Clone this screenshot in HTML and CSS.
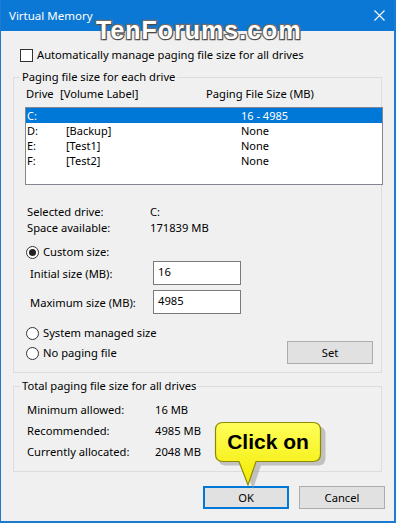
FILE: index.html
```html
<!DOCTYPE html>
<html lang="en">
<head>
    <meta charset="UTF-8">
    <meta name="viewport" content="width=device-width, initial-scale=1.0">
    <title>Virtual Memory</title>
    <link rel="stylesheet" href="styles.css">
</head>
<body>
    <div class="window">
        <div class="titlebar">
            <span class="title">Virtual Memory</span>
            <svg class="close" width="11" height="11" viewBox="0 0 11 11">
                <path d="M0.5 0.5 L10.5 10.5 M10.5 0.5 L0.5 10.5" stroke="#fff" stroke-width="1.1" fill="none"/>
            </svg>
        </div>

        <div class="watermark">TenForums.com</div>

        <div class="dialog">
            <label class="check-row">
                <span class="checkbox"></span>
                <span>Automatically manage paging file size for all drives</span>
            </label>

            <fieldset class="group group-drives">
                <legend>Paging file size for each drive</legend>

                <div class="list-head">
                    <span class="col-drive">Drive</span>
                    <span class="col-label">[Volume Label]</span>
                    <span class="col-size">Paging File Size (MB)</span>
                </div>

                <div class="drive-list">
                    <div class="drive-row selected">
                        <span class="col-drive">C:</span>
                        <span class="col-label"></span>
                        <span class="col-size">16 - 4985</span>
                    </div>
                    <div class="drive-row">
                        <span class="col-drive">D:</span>
                        <span class="col-label">[Backup]</span>
                        <span class="col-size">None</span>
                    </div>
                    <div class="drive-row">
                        <span class="col-drive">E:</span>
                        <span class="col-label">[Test1]</span>
                        <span class="col-size">None</span>
                    </div>
                    <div class="drive-row">
                        <span class="col-drive">F:</span>
                        <span class="col-label">[Test2]</span>
                        <span class="col-size">None</span>
                    </div>
                </div>

                <div class="info">
                    <div class="info-row"><span class="info-key">Selected drive:</span><span>C:</span></div>
                    <div class="info-row"><span class="info-key">Space available:</span><span>171839 MB</span></div>
                </div>

                <div class="radio-row custom">
                    <span class="radio checked"></span>
                    <span>Custom size:</span>
                </div>

                <div class="size-row first">
                    <span class="size-key">Initial size (MB):</span>
                    <span class="textbox">16</span>
                </div>
                <div class="size-row">
                    <span class="size-key">Maximum size (MB):</span>
                    <span class="textbox">4985</span>
                </div>

                <div class="bottom-row">
                    <div class="radios">
                        <div class="radio-row">
                            <span class="radio"></span>
                            <span>System managed size</span>
                        </div>
                        <div class="radio-row">
                            <span class="radio"></span>
                            <span>No paging file</span>
                        </div>
                    </div>
                    <button class="btn btn-set">Set</button>
                </div>
            </fieldset>

            <fieldset class="group group-total">
                <legend>Total paging file size for all drives</legend>
                <div class="total-row"><span class="total-key">Minimum allowed:</span><span>16 MB</span></div>
                <div class="total-row"><span class="total-key">Recommended:</span><span>4985 MB</span></div>
                <div class="total-row"><span class="total-key">Currently allocated:</span><span>2048 MB</span></div>
            </fieldset>

            <div class="buttons">
                <button class="btn btn-default">OK</button>
                <button class="btn">Cancel</button>
            </div>
        </div>

        <div class="callout">
            <svg class="callout-shape" width="116" height="70" viewBox="0 0 116 70">
                <defs>
                    <linearGradient id="yellow" x1="0" y1="0" x2="0" y2="1">
                        <stop offset="0" stop-color="#ffff5a"/>
                        <stop offset="1" stop-color="#f2ea00"/>
                    </linearGradient>
                </defs>
                <path d="M10 3.5 H102 Q109.5 3.5 109.5 11 V35 Q109.5 42.5 102 42.5 H45 L37 66 L28 42.5 H10 Q2.5 42.5 2.5 35 V11 Q2.5 3.5 10 3.5 Z"
                      fill="#9a9a9a" opacity="0.55" transform="translate(3 2)"/>
                <path d="M10 1.5 H100 Q107.5 1.5 107.5 9 V33 Q107.5 40.5 100 40.5 H43 L35 64 L26 40.5 H10 Q2.5 40.5 2.5 33 V9 Q2.5 1.5 10 1.5 Z"
                      fill="url(#yellow)" stroke="#8d8a00" stroke-width="1.2"/>
            </svg>
            <span class="callout-text">Click on</span>
        </div>
    </div>
</body>
</html>
```

FILE: styles.css
```css
* {
    margin: 0;
    padding: 0;
    box-sizing: border-box;
}

body {
    font-family: "Noto Sans", "Open Sans", sans-serif;
    font-size: 11.2px;
    color: #000;
    background: #f0f0f0;
}

.window {
    position: relative;
    width: 396px;
    height: 523px;
    background: #f0f0f0;
    border-left: 1px solid #1c7bd0;
    border-right: 2px solid #1c7bd0;
    border-bottom: 2px solid #1c7bd0;
    overflow: hidden;
}

.titlebar {
    height: 31px;
    background: #0c78d6;
    display: flex;
    align-items: center;
    justify-content: space-between;
    padding: 0 9px 0 8px;
}

.title {
    color: #fff;
    font-size: 11.5px;
    line-height: 16px;
}

.close {
    display: block;
}

.watermark {
    position: absolute;
    left: 95px;
    top: 15px;
    font-family: "Liberation Sans", Arial, sans-serif;
    font-weight: bold;
    font-size: 25px;
    line-height: 30px;
    letter-spacing: 1px;
    color: #fff;
    -webkit-text-stroke: 2.5px #6b6b6b;
    paint-order: stroke fill;
    text-shadow: 1px 1px 1px rgba(0, 0, 0, 0.35);
}

.dialog {
    padding: 0 9px 0 12px;
}

.check-row {
    display: flex;
    align-items: center;
    height: 16px;
    line-height: 16px;
    margin: 16px 0 0 7px;
}

.checkbox {
    width: 13px;
    height: 13px;
    border: 1px solid #333;
    background: #fff;
    margin-right: 4px;
}

.group {
    border: 1px solid #dcdcdc;
    min-width: 0;
    margin-right: 3px;
}

.group legend {
    margin-left: 6px;
    padding: 0 2px;
    line-height: 16px;
}

.group-drives {
    margin-top: 6px;
    padding-bottom: 8px;
}

.list-head {
    display: flex;
    line-height: 16px;
    margin: 1px 0 0 12px;
}

.col-drive {
    width: 34px;
}

.col-label {
    width: 146px;
}

.drive-list {
    height: 78px;
    margin: 5px -2px 0 11px;
    border: 1px solid #828790;
    background: #fff;
}

.drive-row {
    display: flex;
    height: 15px;
    font-size: 11px;
    line-height: 15px;
    padding-left: 1px;
}

.drive-row .col-drive {
    width: 39px;
}

.drive-row .col-label {
    width: 175px;
}

.drive-row.selected {
    background: #0078d7;
    color: #fff;
}

.info {
    margin: 19px 0 0 13px;
}

.info-row {
    display: flex;
    line-height: 16px;
}

.info-key {
    width: 123px;
}

.radio-row {
    display: flex;
    align-items: center;
    line-height: 16px;
    margin-left: 12px;
}

.radio-row.custom {
    margin-top: 8px;
}

.radio {
    position: relative;
    width: 13px;
    height: 13px;
    border: 1px solid #333;
    border-radius: 50%;
    background: #fff;
    margin-right: 4px;
}

.radio.checked::after {
    content: "";
    position: absolute;
    left: 2px;
    top: 2px;
    width: 7px;
    height: 7px;
    border-radius: 50%;
    background: #222;
}

.size-row {
    display: flex;
    align-items: center;
    margin: 5px 0 0 16px;
}

.size-row.first {
    margin-top: 1px;
}

.size-key {
    width: 123px;
}

.textbox {
    width: 88px;
    height: 24px;
    border: 1px solid #7a7a7a;
    background: #fff;
    padding: 2px 0 0 4px;
    line-height: 16px;
}

.bottom-row {
    display: flex;
    justify-content: space-between;
    align-items: flex-end;
    margin: 11px 8px 0 0;
}

.radios {
    display: flex;
    flex-direction: column;
    gap: 4px;
    margin-bottom: 3px;
}

.btn {
    font-family: inherit;
    font-size: 11.2px;
    color: #000;
    width: 86px;
    height: 23px;
    background: #e1e1e1;
    border: 1px solid #adadad;
}

.group-total {
    margin-top: 5px;
    padding: 5px 0 9px 13px;
}

.group-total legend {
    margin-left: -7px;
}

.total-row {
    display: flex;
    line-height: 21px;
}

.total-key {
    width: 128px;
}

.buttons {
    display: flex;
    justify-content: flex-end;
    gap: 10px;
    margin-top: 14px;
}

.btn-default {
    border: 2px solid #0078d7;
}

.callout {
    position: absolute;
    left: 212px;
    top: 421px;
    width: 116px;
    height: 70px;
}

.callout-shape {
    display: block;
}

.callout-text {
    position: absolute;
    left: 0;
    top: 9px;
    width: 110px;
    text-align: center;
    font-family: "Liberation Sans", Arial, sans-serif;
    font-weight: bold;
    font-size: 21px;
    line-height: 24px;
    color: #000;
}
```
